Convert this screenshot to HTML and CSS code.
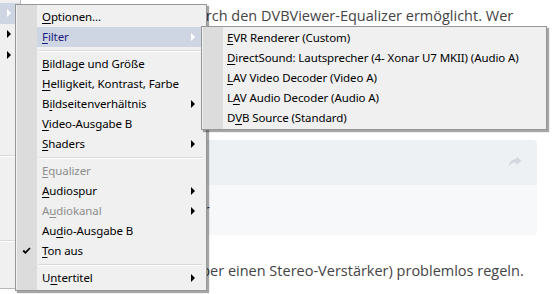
FILE: index.html
```html
<!DOCTYPE html>
<html>
<head>
  <meta charset="utf-8">
  <title>DVBViewer Kontextmenü</title>
  <link rel="stylesheet" href="styles.css">
</head>
<body>
  <div class="page">
    <p class="text">durch den DVBViewer-Equalizer ermöglicht. Wer</p>
    <div class="quote">
      <div class="quote-head">
        <svg class="share" width="14" height="12" viewBox="0 0 14 12">
          <path d="M8.5 0.5 L13.5 4.8 L8.5 9 L8.5 6.4 C5 6.2 2.6 7.4 0.8 10.6 C1.2 6 3.6 3.3 8.5 3 Z" fill="#d3d8de"/>
        </svg>
      </div>
      <div class="quote-body">oder</div>
    </div>
    <p class="text">(über einen Stereo-Verstärker) problemlos regeln.</p>
  </div>

  <ul class="menu parent">
    <li class="item hot"><span class="arrow white"></span></li>
    <li class="item"><span class="arrow"></span></li>
    <li class="item"><span class="arrow"></span></li>
  </ul>

  <ul class="menu main">
    <li class="item"><u>O</u>ptionen...</li>
    <li class="item hot"><u>F</u>ilter<span class="arrow white"></span></li>
    <li class="sep"></li>
    <li class="item"><u>B</u>ildlage und Größe</li>
    <li class="item"><u>H</u>elligkeit, Kontrast, Farbe</li>
    <li class="item">B<u>i</u>ldseitenverhältnis<span class="arrow"></span></li>
    <li class="item"><u>V</u>ideo-Ausgabe B</li>
    <li class="item"><u>S</u>haders<span class="arrow"></span></li>
    <li class="sep"></li>
    <li class="item off"><u>E</u>qualizer</li>
    <li class="item"><u>A</u>udiospur<span class="arrow"></span></li>
    <li class="item off">A<u>u</u>diokanal<span class="arrow"></span></li>
    <li class="item">Au<u>d</u>io-Ausgabe B</li>
    <li class="item">
      <svg class="check" width="9" height="8" viewBox="0 0 9 8"><path d="M0.5 4.2 L2 2.8 L3.4 4.4 L7.4 0.4 L8.6 1.6 L3.4 7 Z" fill="#000"/></svg>
      <u>T</u>on aus
    </li>
    <li class="sep"></li>
    <li class="item">U<u>n</u>tertitel<span class="arrow"></span></li>
  </ul>

  <ul class="menu sub">
    <li class="item"><u>E</u>VR Renderer (Custom)</li>
    <li class="item"><u>D</u>irectSound: Lautsprecher (4- Xonar U7 MKII) (Audio A)</li>
    <li class="item"><u>L</u>AV Video Decoder (Video A)</li>
    <li class="item">L<u>A</u>V Audio Decoder (Audio A)</li>
    <li class="item">D<u>V</u>B Source (Standard)</li>
  </ul>
</body>
</html>
```

FILE: styles.css
```css
*{
  padding: 0;
  margin: 0;
}
body{
  background: #fff;
  color: #444;
  font-family: "Open Sans", sans-serif;
  font-size: 14.5px;
  width: 552px;
  height: 294px;
  overflow: hidden;
  position: relative;
}
.page{
  padding: 4.4px 0 0 188px;
  width: 349px;
}
.text{
  line-height: 24px;
  white-space: nowrap;
}
.quote{
  margin: 111.6px 0 0 -28px;
  border-radius: 4px;
  overflow: hidden;
}
.quote-head{
  height: 45px;
  background: #eef1f4;
  display: flex;
  justify-content: flex-end;
  align-items: center;
  padding-right: 15px;
}
.quote-body{
  height: 50px;
  background: #f6f8fa;
  line-height: 50px;
  padding-left: 18px;
}
.quote + .text{
  margin-top: 24.4px;
}

/* menus */
.menu{
  position: absolute;
  list-style: none;
  background-color: #f0f0f0;
  border: 1px solid #979797;
  box-shadow: 2px 2px 1px rgba(0,0,0,0.35);
  font-family: "Noto Sans", sans-serif;
  font-size: 11.5px;
  letter-spacing: -0.1px;
  color: #000;
}
.item{
  position: relative;
  height: 20px;
  line-height: 20px;
  padding-left: 5px;
  margin-left: 20px;
  white-space: nowrap;
}
.item u{
  text-underline-offset: 2px;
}
.hot{
  background: #cfd6e3;
  color: #1d1d80;
}
.off{
  color: #8d8d8d;
}
.sep{
  height: 7px;
  margin-left: 22px;
  margin-right: 2px;
  background: linear-gradient(#f0f0f0 3px, #d7d7d7 3px, #d7d7d7 4px, #fff 4px, #fff 5px, #f0f0f0 5px);
}
.arrow{
  position: absolute;
  right: 8px;
  top: 6px;
  width: 0;
  height: 0;
  border-left: 4px solid #000;
  border-top: 4px solid transparent;
  border-bottom: 4px solid transparent;
}
.arrow.white{
  border-left-color: #fff;
}
.check{
  position: absolute;
  left: -15px;
  top: 6px;
}

.parent{
  left: -60px;
  top: -10px;
  width: 79px;
  height: 285px;
  padding-top: 12px;
  box-shadow: none;
  border-color: #b9b9b9;
  background: linear-gradient(#f0f0f0 164px, #d9d9d9 164px, #d9d9d9 165px, #fff 165px, #fff 166px, #f0f0f0 166px, #f0f0f0 249px, #d9d9d9 249px, #d9d9d9 250px, #fff 250px, #fff 251px, #f0f0f0 251px);
}
.parent .item{
  margin-left: 0;
  padding-left: 0;
  height: 21px;
}
.parent .arrow{
  right: 9px;
}

.main{
  left: 15px;
  top: 4px;
  width: 187px;
  padding: 2px 2px 2px 1px;
  background: linear-gradient(to right, #f0f0f0 1px, #dcdcdc 1px, #dcdcdc 21px, #f0f0f0 21px);
}
.main .item{
  margin-right: 1px;
}

.sub{
  left: 201px;
  top: 26px;
  width: 343px;
  padding: 1px 1px 1px 0;
  background: linear-gradient(to right, #f0f0f0 1px, #dcdcdc 1px, #dcdcdc 21px, #f0f0f0 21px);
}
```
